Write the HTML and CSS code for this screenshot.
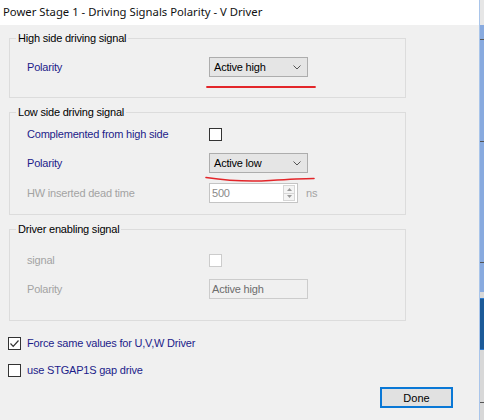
FILE: index.html
```html
<!DOCTYPE html>
<html lang="en">
<head>
    <meta charset="UTF-8">
    <title>Power Stage 1 - Driving Signals Polarity - V Driver</title>
    <link rel="stylesheet" href="styles.css">
</head>
<body>
    <div class="dialog">
        <div class="title-bar">Power Stage 1 - Driving Signals Polarity - V Driver</div>
        <div class="content">
            <fieldset class="group group-high">
                <legend>High side driving signal</legend>
                <div class="row">
                    <span class="label">Polarity</span>
                    <div class="combo"><span>Active high</span><svg class="chevron" width="8" height="5" viewBox="0 0 8 5"><path d="M0.5 0.5 L4 4 L7.5 0.5" fill="none" stroke="#555" stroke-width="1"/></svg></div>
                </div>
            </fieldset>

            <fieldset class="group group-low">
                <legend>Low side driving signal</legend>
                <div class="row">
                    <span class="label">Complemented from high side</span>
                    <span class="check"></span>
                </div>
                <div class="row">
                    <span class="label">Polarity</span>
                    <div class="combo"><span>Active low</span><svg class="chevron" width="8" height="5" viewBox="0 0 8 5"><path d="M0.5 0.5 L4 4 L7.5 0.5" fill="none" stroke="#555" stroke-width="1"/></svg></div>
                </div>
                <div class="row">
                    <span class="label disabled">HW inserted dead time</span>
                    <div class="spin">
                        <span class="spin-value">500</span>
                        <div class="spin-buttons">
                            <span class="spin-btn"><svg width="5" height="3" viewBox="0 0 5 3"><path d="M0 3 L2.5 0 L5 3 Z" fill="#9a9a9a"/></svg></span>
                            <span class="spin-btn"><svg width="5" height="3" viewBox="0 0 5 3"><path d="M0 0 L2.5 3 L5 0 Z" fill="#9a9a9a"/></svg></span>
                        </div>
                    </div>
                    <span class="unit">ns</span>
                </div>
            </fieldset>

            <fieldset class="group group-enable">
                <legend>Driver enabling signal</legend>
                <div class="row">
                    <span class="label disabled">signal</span>
                    <span class="check check-disabled"></span>
                </div>
                <div class="row">
                    <span class="label disabled">Polarity</span>
                    <div class="textbox-disabled">Active high</div>
                </div>
            </fieldset>

            <div class="option option-first">
                <span class="check checked"><svg width="11" height="11" viewBox="0 0 11 11"><path d="M1.5 5.5 L4.2 8.3 L9.5 2.5" fill="none" stroke="#333" stroke-width="1.2"/></svg></span>
                <span class="option-label">Force same values for U,V,W Driver</span>
            </div>
            <div class="option">
                <span class="check"></span>
                <span class="option-label">use STGAP1S gap drive</span>
            </div>

            <div class="actions">
                <button class="btn-done">Done</button>
            </div>
        </div>

        <!-- red pen marks drawn on top of the form -->
        <svg class="marks" width="479" height="420" viewBox="0 0 479 420">
            <path d="M207 87 L315 87" stroke="#e3262a" stroke-width="1.8" fill="none" stroke-linecap="round"/>
            <path d="M206 177.5 Q 240 182.5 270 180.5 T 314 178.5" stroke="#e3262a" stroke-width="1.6" fill="none" stroke-linecap="round"/>
        </svg>
    </div>
    <div class="side">
        <span class="tick tick-1"></span>
        <span class="tick tick-2"></span>
        <span class="tick tick-3"></span>
        <span class="side-dark"></span>
        <span class="tick tick-4"></span>
    </div>
</body>
</html>
```

FILE: styles.css
```css
body {
    margin: 0;
    width: 484px;
    height: 420px;
    display: flex;
    overflow: hidden;
    font-family: "Liberation Sans", Arial, sans-serif;
    font-size: 11px;
    letter-spacing: -0.2px;
    background-color: #f0f0f0;
}
.dialog {
    position: relative;
    width: 479px;
    height: 420px;
    background-color: #f0f0f0;
    flex-shrink: 0;
}
.title-bar {
    height: 25px;
    line-height: 24px;
    padding-left: 3px;
    background-color: #fff;
    color: #111;
    font-family: "Noto Sans", sans-serif;
    font-size: 11.3px;
    letter-spacing: 0;
}
.content {
    padding: 6px 0 0 8px;
}
.group {
    box-sizing: border-box;
    width: 397px;
    margin: 0 0 0 1px;
    padding: 0;
    border: 1px solid #dcdcdc;
}
.group legend {
    padding: 0 2px;
    margin-left: 6px;
    line-height: 14px;
    color: #000;
}
.group-high {
    padding-top: 12px;
    padding-bottom: 20px;
}
.group-low {
    margin-top: 7px;
    padding-top: 5px;
    padding-bottom: 11px;
}
.group-enable {
    margin-top: 7px;
    padding-top: 14px;
    padding-bottom: 21px;
}
.row {
    display: flex;
    align-items: center;
    height: 20px;
    padding-left: 17px;
}
.group-low .row + .row {
    margin-top: 9px;
}
.group-low .row:last-child {
    margin-top: 10px;
}
.group-enable .row + .row {
    margin-top: 9px;
}
.label {
    width: 182px;
    flex-shrink: 0;
    color: #1c1c8a;
}
.label.disabled {
    color: #a3a3a3;
}
.combo {
    box-sizing: border-box;
    width: 99px;
    height: 20px;
    display: flex;
    align-items: center;
    justify-content: space-between;
    padding: 0 6px 0 4px;
    background-color: #e5e5e5;
    border: 1px solid #adadad;
    color: #000;
}
.check {
    box-sizing: border-box;
    width: 13px;
    height: 13px;
    border: 1px solid #333;
    background-color: #fff;
    display: flex;
    align-items: center;
    justify-content: center;
    flex-shrink: 0;
}
.check-disabled {
    border-color: #cccccc;
}
.spin {
    box-sizing: border-box;
    width: 89px;
    height: 20px;
    display: flex;
    align-items: center;
    justify-content: space-between;
    padding: 0 2px 0 2px;
    background-color: #fff;
    border: 1px solid #c4c4c4;
}
.spin-value {
    color: #8a8a8a;
}
.spin-buttons {
    display: flex;
    flex-direction: column;
    width: 12px;
    height: 16px;
    border: 1px solid #d6d6d6;
    box-sizing: border-box;
}
.spin-btn {
    flex: 1;
    display: flex;
    align-items: center;
    justify-content: center;
    background-color: #f4f4f4;
}
.spin-btn + .spin-btn {
    border-top: 1px solid #d6d6d6;
}
.unit {
    margin-left: 8px;
    color: #a3a3a3;
}
.textbox-disabled {
    box-sizing: border-box;
    width: 99px;
    height: 20px;
    line-height: 18px;
    padding-left: 2px;
    border: 1px solid #cccccc;
    color: #6d6d6d;
    background-color: #f0f0f0;
}
.option {
    display: flex;
    align-items: center;
    height: 20px;
    margin-top: 7px;
}
.option-first {
    margin-top: 12px;
}
.option .check {
    border-color: #333;
}
.option-label {
    margin-left: 6px;
    color: #1c1c8a;
}
.actions {
    display: flex;
    justify-content: flex-end;
    width: 445px;
    margin-top: 7px;
}
.btn-done {
    box-sizing: border-box;
    width: 73px;
    height: 21px;
    padding: 0;
    background-color: #e1e1e1;
    border: 2px solid #0a78d6;
    font-family: "Liberation Sans", Arial, sans-serif;
    font-size: 11px;
    color: #000;
}
.marks {
    position: absolute;
    left: 0;
    top: 0;
    pointer-events: none;
}
.side {
    position: relative;
    width: 5px;
    height: 420px;
    box-sizing: border-box;
    border-left: 1px solid #a9c5ea;
    background: linear-gradient(#e6e6e6 0, #e6e6e6 25px, #88aadf 25px, #88aadf 292px, #d8d8d8 292px);
}
.side-dark {
    position: absolute;
    left: 0;
    top: 298px;
    width: 4px;
    height: 50px;
    background-color: #1c5a98;
    border-top: 1px solid #2c7ad0;
    border-bottom: 1px solid #2c7ad0;
}
.tick {
    position: absolute;
    left: 0;
    width: 4px;
    height: 1px;
    background-color: #555;
}
.tick-1 { top: 39px; }
.tick-2 { top: 141px; }
.tick-3 { top: 262px; }
.tick-4 { top: 402px; }
```
